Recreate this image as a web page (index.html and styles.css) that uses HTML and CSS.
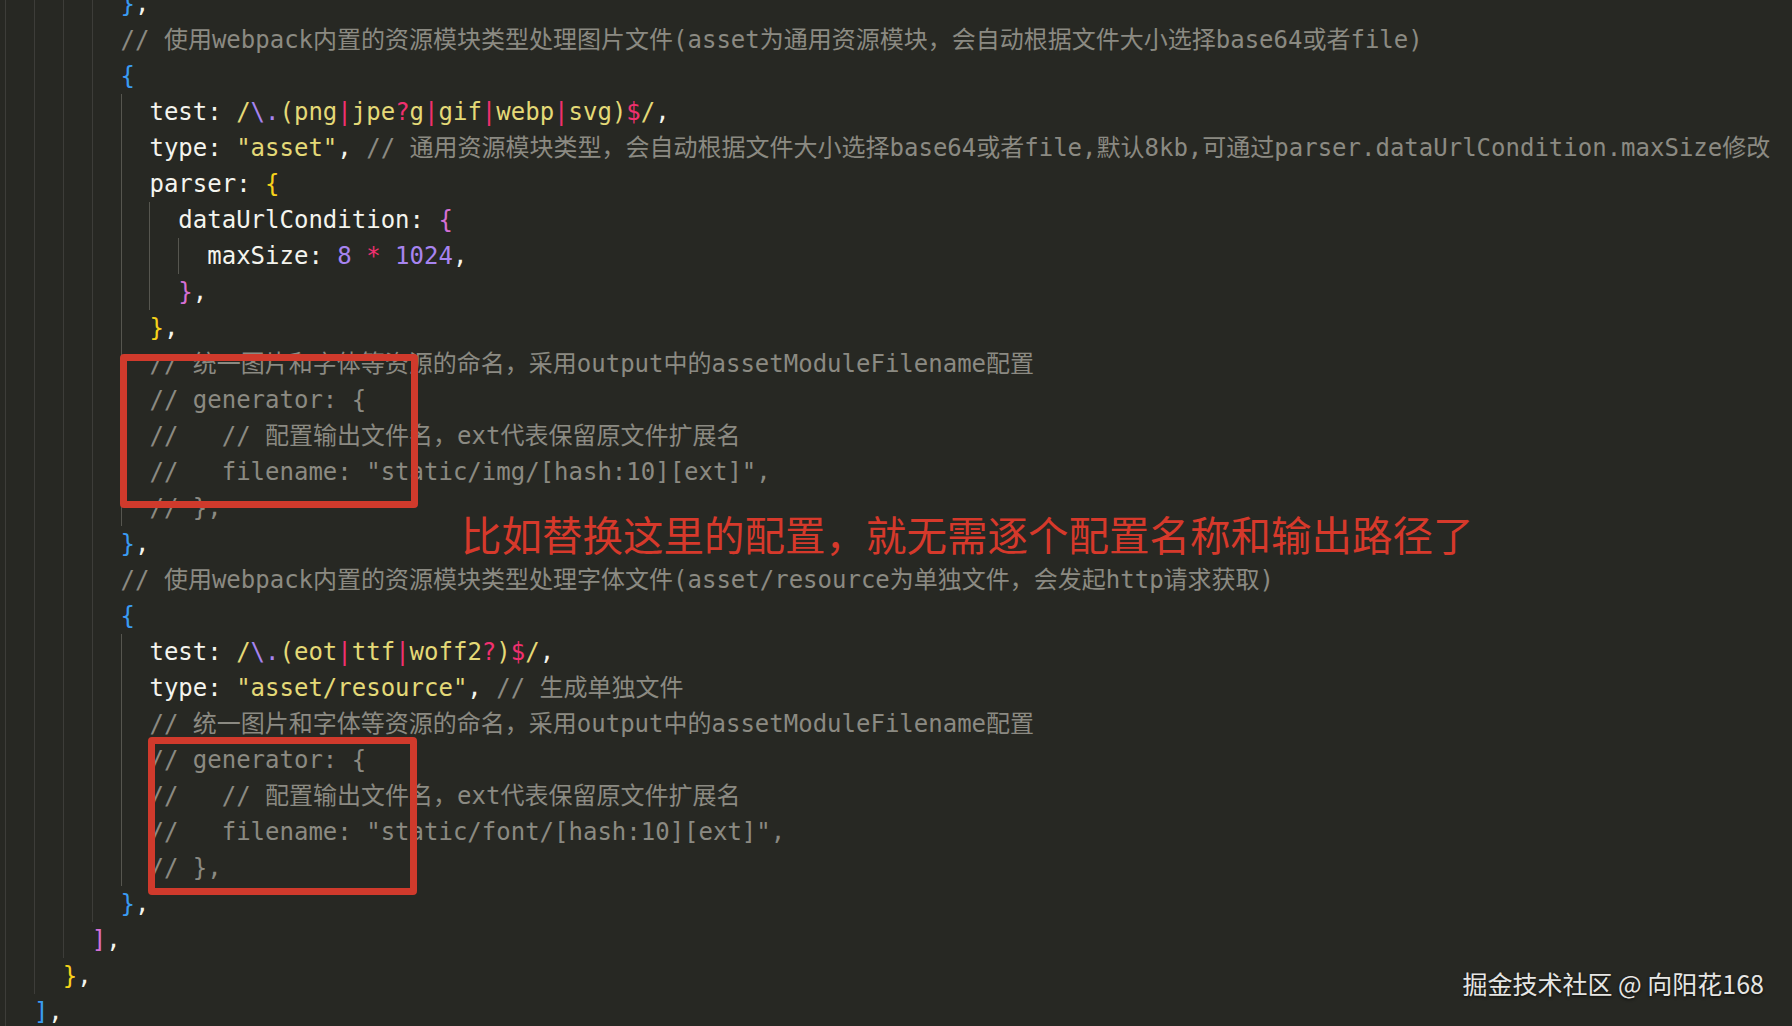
FILE: index.html
```html
<!DOCTYPE html>
<html lang="zh-CN">
<head>
<meta charset="utf-8">
<title>webpack asset modules</title>
<link rel="stylesheet" href="styles.css">
</head>
<body>
<div class="screen">
  <div class="editor">
    <div class="line"><span class="g"></span><span class="g"></span><span class="g"></span><span class="g"></span><span class="code"><span class="b3">}</span>,</span></div>
    <div class="line"><span class="g"></span><span class="g"></span><span class="g"></span><span class="g"></span><span class="code c">// 使用webpack内置的资源模块类型处理图片文件(asset为通用资源模块，会自动根据文件大小选择base64或者file)</span></div>
    <div class="line"><span class="g"></span><span class="g"></span><span class="g"></span><span class="g"></span><span class="code"><span class="b3">{</span></span></div>
    <div class="line"><span class="g"></span><span class="g"></span><span class="g"></span><span class="g"></span><span class="g hi"></span><span class="code">test: <span class="s">/</span><span class="n">\.</span><span class="s">(png</span><span class="op">|</span><span class="s">jpe</span><span class="op">?</span><span class="s">g</span><span class="op">|</span><span class="s">gif</span><span class="op">|</span><span class="s">webp</span><span class="op">|</span><span class="s">svg)</span><span class="op">$</span><span class="s">/</span>,</span></div>
    <div class="line"><span class="g"></span><span class="g"></span><span class="g"></span><span class="g"></span><span class="g hi"></span><span class="code">type: <span class="s">"asset"</span>, <span class="c">// 通用资源模块类型，会自动根据文件大小选择base64或者file,默认8kb,可通过parser.dataUrlCondition.maxSize修改</span></span></div>
    <div class="line"><span class="g"></span><span class="g"></span><span class="g"></span><span class="g"></span><span class="g hi"></span><span class="code">parser: <span class="b1">{</span></span></div>
    <div class="line"><span class="g"></span><span class="g"></span><span class="g"></span><span class="g"></span><span class="g hi"></span><span class="g hi"></span><span class="code">dataUrlCondition: <span class="b2">{</span></span></div>
    <div class="line"><span class="g"></span><span class="g"></span><span class="g"></span><span class="g"></span><span class="g hi"></span><span class="g hi"></span><span class="g hi"></span><span class="code">maxSize: <span class="n">8</span> <span class="op">*</span> <span class="n">1024</span>,</span></div>
    <div class="line"><span class="g"></span><span class="g"></span><span class="g"></span><span class="g"></span><span class="g hi"></span><span class="g hi"></span><span class="code"><span class="b2">}</span>,</span></div>
    <div class="line"><span class="g"></span><span class="g"></span><span class="g"></span><span class="g"></span><span class="g hi"></span><span class="code"><span class="b1">}</span>,</span></div>
    <div class="line"><span class="g"></span><span class="g"></span><span class="g"></span><span class="g"></span><span class="g hi"></span><span class="code c">// 统一图片和字体等资源的命名，采用output中的assetModuleFilename配置</span></div>
    <div class="line"><span class="g"></span><span class="g"></span><span class="g"></span><span class="g"></span><span class="g hi"></span><span class="code c">// generator: {</span></div>
    <div class="line"><span class="g"></span><span class="g"></span><span class="g"></span><span class="g"></span><span class="g hi"></span><span class="code c">//   // 配置输出文件名，ext代表保留原文件扩展名</span></div>
    <div class="line"><span class="g"></span><span class="g"></span><span class="g"></span><span class="g"></span><span class="g hi"></span><span class="code c">//   filename: "static/img/[hash:10][ext]",</span></div>
    <div class="line"><span class="g"></span><span class="g"></span><span class="g"></span><span class="g"></span><span class="g hi"></span><span class="code c">// },</span></div>
    <div class="line"><span class="g"></span><span class="g"></span><span class="g"></span><span class="g"></span><span class="code"><span class="b3">}</span>,</span></div>
    <div class="line"><span class="g"></span><span class="g"></span><span class="g"></span><span class="g"></span><span class="code c">// 使用webpack内置的资源模块类型处理字体文件(asset/resource为单独文件，会发起http请求获取)</span></div>
    <div class="line"><span class="g"></span><span class="g"></span><span class="g"></span><span class="g"></span><span class="code"><span class="b3">{</span></span></div>
    <div class="line"><span class="g"></span><span class="g"></span><span class="g"></span><span class="g"></span><span class="g hi"></span><span class="code">test: <span class="s">/</span><span class="n">\.</span><span class="s">(eot</span><span class="op">|</span><span class="s">ttf</span><span class="op">|</span><span class="s">woff2</span><span class="op">?</span><span class="s">)</span><span class="op">$</span><span class="s">/</span>,</span></div>
    <div class="line"><span class="g"></span><span class="g"></span><span class="g"></span><span class="g"></span><span class="g hi"></span><span class="code">type: <span class="s">"asset/resource"</span>, <span class="c">// 生成单独文件</span></span></div>
    <div class="line"><span class="g"></span><span class="g"></span><span class="g"></span><span class="g"></span><span class="g hi"></span><span class="code c">// 统一图片和字体等资源的命名，采用output中的assetModuleFilename配置</span></div>
    <div class="line"><span class="g"></span><span class="g"></span><span class="g"></span><span class="g"></span><span class="g hi"></span><span class="code c">// generator: {</span></div>
    <div class="line"><span class="g"></span><span class="g"></span><span class="g"></span><span class="g"></span><span class="g hi"></span><span class="code c">//   // 配置输出文件名，ext代表保留原文件扩展名</span></div>
    <div class="line"><span class="g"></span><span class="g"></span><span class="g"></span><span class="g"></span><span class="g hi"></span><span class="code c">//   filename: "static/font/[hash:10][ext]",</span></div>
    <div class="line"><span class="g"></span><span class="g"></span><span class="g"></span><span class="g"></span><span class="g hi"></span><span class="code c">// },</span></div>
    <div class="line"><span class="g"></span><span class="g"></span><span class="g"></span><span class="g"></span><span class="code"><span class="b3">}</span>,</span></div>
    <div class="line"><span class="g"></span><span class="g"></span><span class="g"></span><span class="code"><span class="b2">]</span>,</span></div>
    <div class="line"><span class="g"></span><span class="g"></span><span class="code"><span class="b1">}</span>,</span></div>
    <div class="line"><span class="g"></span><span class="code"><span class="b3">]</span>,</span></div>
  </div>

  <div class="mark mark-img"></div>
  <div class="mark mark-font"></div>
  <div class="note">比如替换这里的配置，就无需逐个配置名称和输出路径了</div>
  <div class="watermark">掘金技术社区 @ 向阳花168</div>
</div>
</body>
</html>
```

FILE: styles.css
```css
html, body {
  margin: 0;
  padding: 0;
  background: #272823;
}

.screen {
  position: relative;
  width: 1792px;
  height: 1026px;
  overflow: hidden;
  background: #272823;
}

.editor {
  margin-top: -14px;
  padding-left: 5px;
  font-family: "DejaVu Sans Mono", "Noto Sans CJK SC", monospace;
  font-size: 24px;
  line-height: 36px;
  color: #f4f4ee;
}

.line {
  display: flex;
  height: 36px;
  white-space: pre;
}

.g {
  flex: none;
  width: 2ch;
  height: 36px;
  box-shadow: inset 1px 0 0 #3d3d39;
}

.g.hi {
  box-shadow: inset 1px 0 0 #56564f;
}

.code {
  flex: none;
}

.c { color: #8b8a82; }
.s { color: #e4d977; }
.n { color: #a784f0; }
.op { color: #f0306f; }
.b1 { color: #f6d21b; }
.b2 { color: #d56fd3; }
.b3 { color: #3a9bf2; }

.mark {
  position: absolute;
  box-sizing: border-box;
  border: 7px solid #d03a2c;
  border-radius: 4px;
}

.mark-img {
  left: 120px;
  top: 354px;
  width: 298px;
  height: 154px;
}

.mark-font {
  left: 148px;
  top: 737px;
  width: 269px;
  height: 158px;
}

.note {
  position: absolute;
  left: 461px;
  top: 513px;
  font-family: "Noto Sans CJK SC", sans-serif;
  font-size: 40.5px;
  line-height: 41px;
  font-weight: 400;
  color: #d6392b;
  white-space: nowrap;
}

.watermark {
  position: absolute;
  right: 28px;
  top: 967px;
  font-family: "Noto Sans CJK SC", sans-serif;
  font-size: 25px;
  line-height: 32px;
  color: #e6e6e4;
  white-space: nowrap;
  text-shadow: 0 1px 3px rgba(0, 0, 0, 0.7);
}
```
